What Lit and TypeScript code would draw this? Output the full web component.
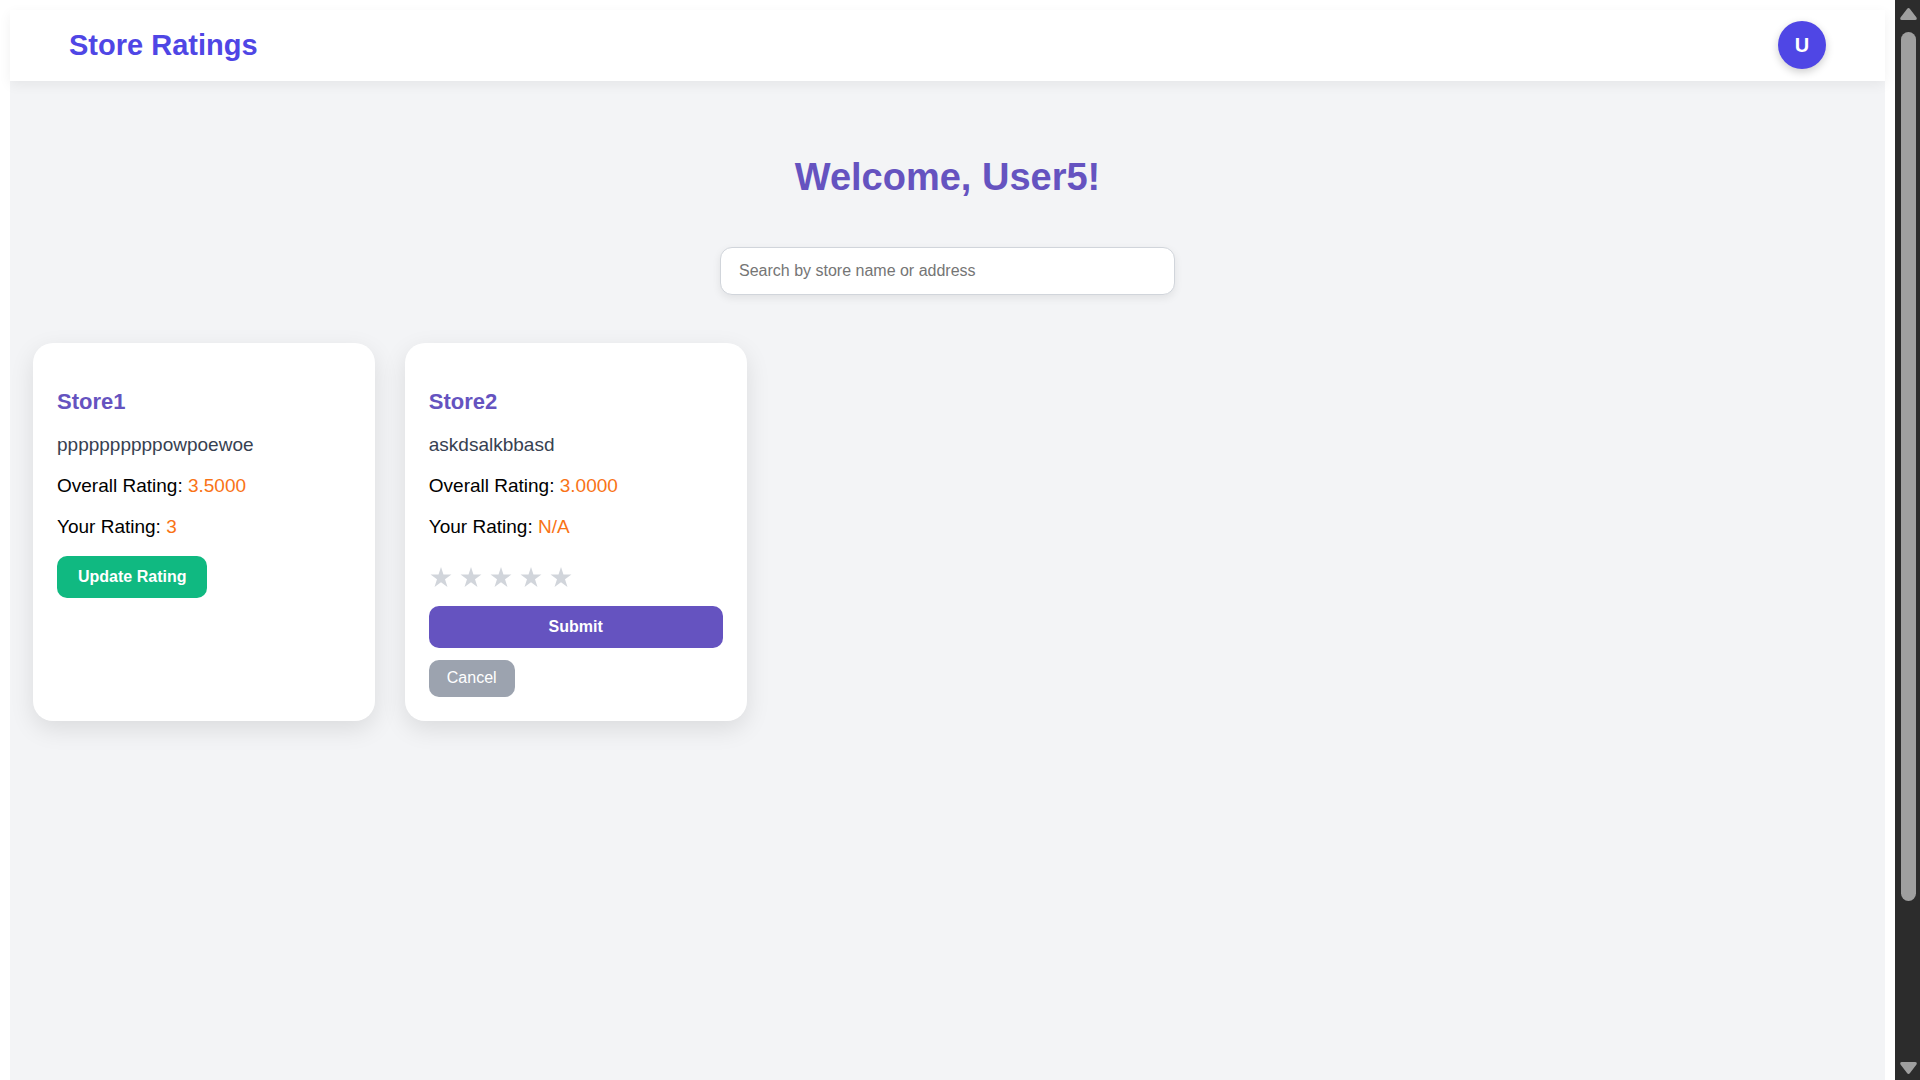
import { LitElement, html, css, nothing } from "lit";
import { customElement, property, state } from "lit/decorators.js";

interface Store {
  name: string;
  address: string;
  overall: string;
  yours: string;
  editing: boolean;
}

@customElement("store-card")
class StoreCard extends LitElement {
  @property({ attribute: false }) store!: Store;
  @state() private stars = 0;

  static styles = css`
    :host {
      display: block;
      box-sizing: border-box;
      padding: 24px;
      border-radius: 20px;
      background: #fff;
      box-shadow: 0 8px 24px rgba(0, 0, 0, 0.1);
      font-size: 19px;
      line-height: 22px;
    }
    .name {
      margin: 22px 0 19px;
      font-size: 22px;
      line-height: 26px;
      font-weight: bold;
      color: #6553c0;
    }
    .line {
      margin: 0 0 19px;
      color: #000;
    }
    .mine {
      margin-bottom: 18px;
    }
    .address {
      color: #374151;
    }
    .value {
      color: #f97316;
    }
    button {
      display: block;
      border: none;
      border-radius: 10px;
      color: #fff;
      font: 16px/18px "Liberation Sans", Arial, sans-serif;
      cursor: pointer;
    }
    .update,
    .submit {
      padding: 12px 21px;
      font-weight: bold;
    }
    .update {
      background: #10b981;
    }
    .submit {
      width: 100%;
      background: #6553c0;
    }
    .cancel {
      margin-top: 12px;
      padding: 9px 18px 10px;
      background: #9ca3af;
    }
    .stars {
      display: flex;
      gap: 6px;
      padding: 10px 0;
      margin-bottom: 6px;
    }
    .star {
      padding: 0;
      width: 24px;
      height: 24px;
      background: none;
      color: #d1d5db;
    }
    .star.on {
      color: #facc15;
    }
    .star svg {
      display: block;
      width: 24px;
      height: 24px;
      fill: currentColor;
    }
  `;

  private rateForm() {
    return html`
      <div class="stars">
        ${[1, 2, 3, 4, 5].map(
          (n) => html`<button
            class="star ${n <= this.stars ? "on" : ""}"
            aria-label="${n} of 5"
            @click=${() => (this.stars = n)}
          >
            <svg viewBox="0 0 24 24" aria-hidden="true">
              <path
                d="M12 1 14.47 8.6 22.46 8.6 16 13.3 18.47 20.9 12 16.2 5.53 20.9 8 13.3 1.54 8.6 9.53 8.6Z"
              />
            </svg>
          </button>`
        )}
      </div>
      <button class="submit">Submit</button>
      <button class="cancel">Cancel</button>
    `;
  }

  render() {
    const s = this.store;
    if (!s) return nothing;
    return html`
      <h2 class="name">${s.name}</h2>
      <p class="line address">${s.address}</p>
      <p class="line">Overall Rating: <span class="value">${s.overall}</span></p>
      <p class="line mine">Your Rating: <span class="value">${s.yours}</span></p>
      ${s.editing ? this.rateForm() : html`<button class="update">Update Rating</button>`}
    `;
  }
}

@customElement("app-root")
class AppRoot extends LitElement {
  private stores: Store[] = [
    { name: "Store1", address: "ppppppppppowpoewoe", overall: "3.5000", yours: "3", editing: false },
    { name: "Store2", address: "askdsalkbbasd", overall: "3.0000", yours: "N/A", editing: true },
  ];

  static styles = css`
    :host {
      display: flex;
      min-height: 100vh;
      background: #fff;
      font-family: "Liberation Sans", Arial, sans-serif;
    }
    .page {
      flex: 1;
      min-width: 0;
      display: flex;
      flex-direction: column;
      padding: 10px 10px 0;
    }
    .bar {
      display: flex;
      align-items: center;
      justify-content: space-between;
      padding: 11px 59px 12px;
      background: #fff;
      box-shadow: 0 4px 12px rgba(0, 0, 0, 0.06);
      z-index: 1;
    }
    .brand {
      font-size: 29px;
      line-height: 32px;
      font-weight: bold;
      color: #4f46e5;
    }
    .avatar {
      width: 48px;
      height: 48px;
      padding: 0;
      border: none;
      border-radius: 50%;
      background: #4f46e5;
      color: #fff;
      font: bold 20px/22px "Liberation Sans", Arial, sans-serif;
      box-shadow: 0 3px 8px rgba(0, 0, 0, 0.2);
    }
    .main {
      flex: 1;
      display: flex;
      flex-direction: column;
      gap: 48px;
      padding: 74px 23px 48px;
      background: #f3f4f6;
    }
    .welcome {
      margin: 0;
      text-align: center;
      font-size: 38px;
      line-height: 44px;
      font-weight: bold;
      color: #6553c0;
    }
    .search {
      align-self: center;
      box-sizing: border-box;
      width: 455px;
      max-width: 100%;
      height: 48px;
      padding: 0 18px;
      border: 1px solid #d1d5db;
      border-radius: 12px;
      background: #fff;
      font: 16px/18px "Liberation Sans", Arial, sans-serif;
      box-shadow: 0 3px 8px rgba(0, 0, 0, 0.08);
    }
    .search::placeholder {
      color: #757575;
    }
    .grid {
      display: grid;
      grid-template-columns: repeat(auto-fill, minmax(300px, 1fr));
      gap: 30px;
    }
    .scroll {
      box-sizing: border-box;
      width: 25px;
      display: flex;
      flex-direction: column;
      align-items: center;
      padding: 8px 0 6px 2px;
      background: #2c2c2c;
    }
    .arrow {
      display: block;
      width: 17px;
      height: 12px;
      fill: #9f9f9f;
    }
    .track {
      flex: 1;
      align-self: stretch;
      display: flex;
      flex-direction: column;
      padding: 12px 4px 0;
    }
    .thumb {
      flex: 27;
      border-radius: 8px;
      background: #9f9f9f;
    }
    .rest {
      flex: 5;
    }
  `;

  render() {
    return html`
      <div class="page">
        <header class="bar">
          <div class="brand">Store Ratings</div>
          <button class="avatar">U</button>
        </header>
        <main class="main">
          <h1 class="welcome">Welcome, User5!</h1>
          <input
            class="search"
            type="text"
            aria-label="Search by store name or address"
            placeholder="Search by store name or address"
          />
          <section class="grid">
            ${this.stores.map((s) => html`<store-card .store=${s}></store-card>`)}
          </section>
        </main>
      </div>
      <div class="scroll" aria-hidden="true">
        <svg class="arrow" viewBox="0 0 17 12">
          <path d="M7 1Q8.5 -1 10 1L16.5 9.5Q17.5 12 15 12H2Q-.5 12 .5 9.5Z" />
        </svg>
        <div class="track">
          <div class="thumb"></div>
          <div class="rest"></div>
        </div>
        <svg class="arrow" viewBox="0 0 17 12">
          <path d="M7 11Q8.5 13 10 11L16.5 2.5Q17.5 0 15 0H2Q-.5 0 .5 2.5Z" />
        </svg>
      </div>
    `;
  }
}
